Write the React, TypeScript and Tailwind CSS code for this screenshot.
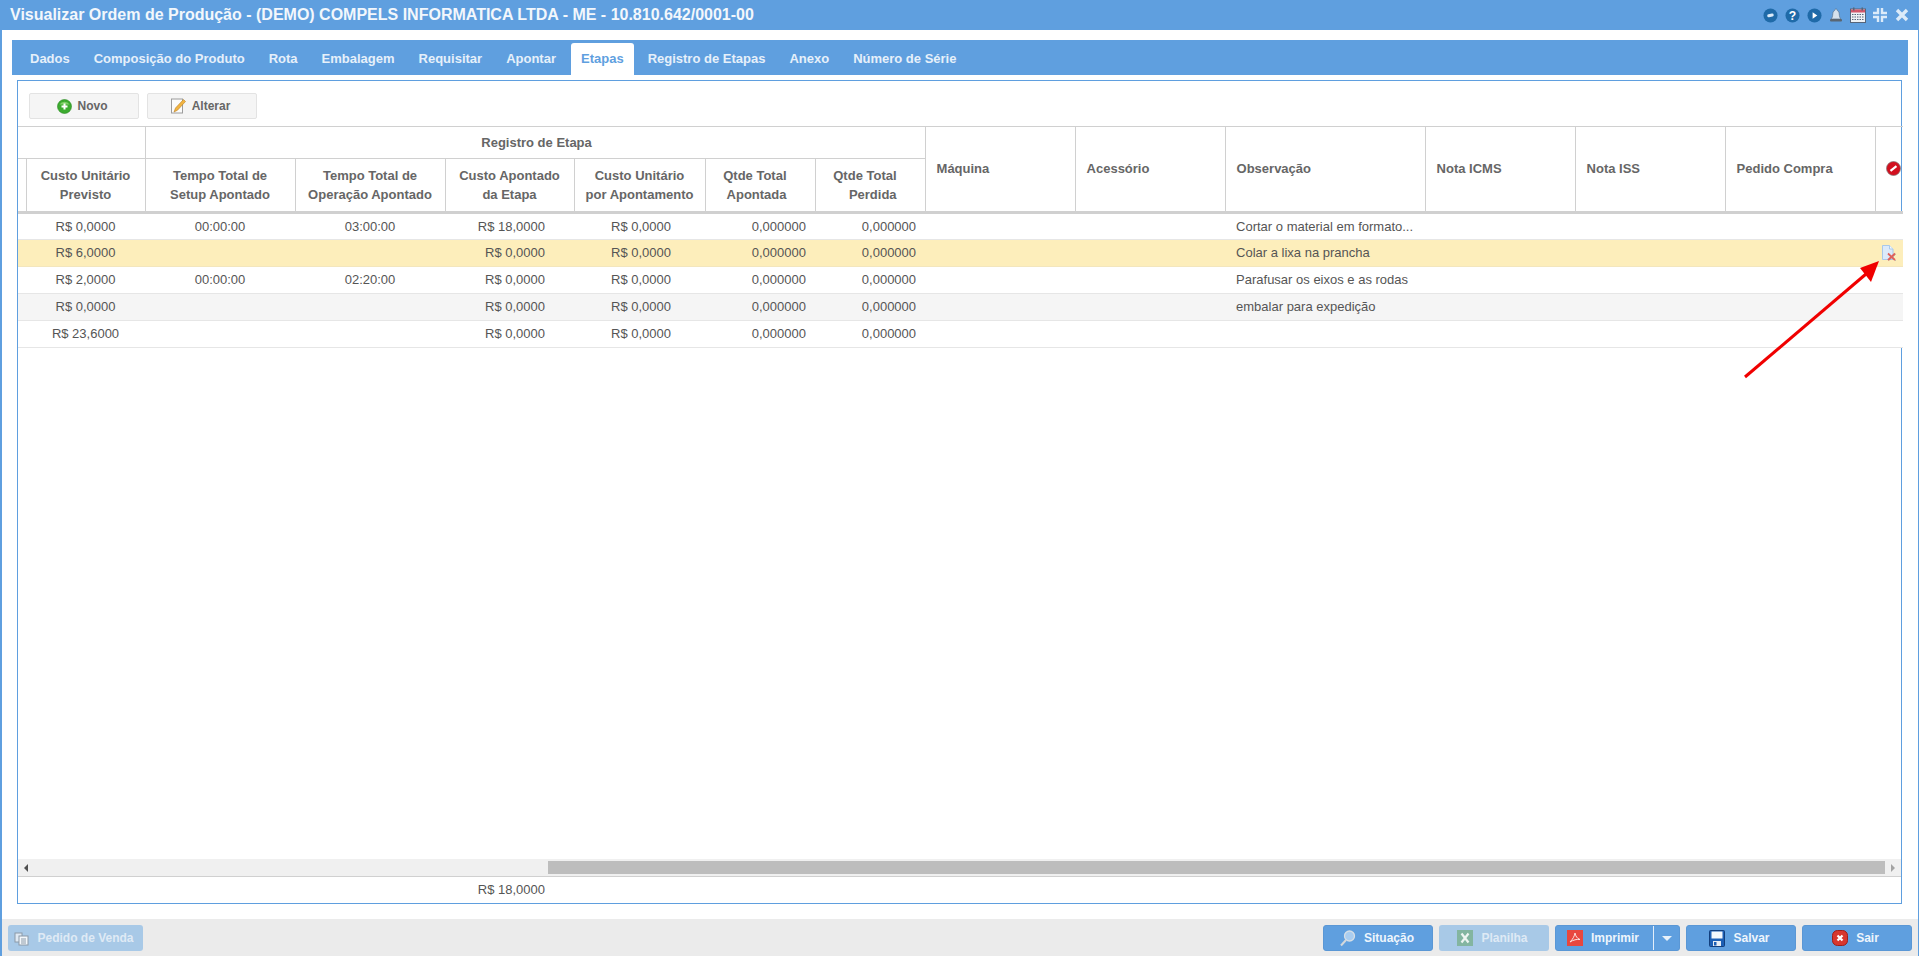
import type { ReactNode } from "react";

const tabs = [
  "Dados",
  "Composição do Produto",
  "Rota",
  "Embalagem",
  "Requisitar",
  "Apontar",
  "Etapas",
  "Registro de Etapas",
  "Anexo",
  "Número de Série",
];

const colWidths = [8, 119, 150, 150, 129, 131, 110, 110, 150, 150, 200, 150, 150, 150, 28];

const rows = [
  { prev: "R$ 0,0000", setup: "00:00:00", oper: "03:00:00", apont: "R$ 18,0000", obs: "Cortar o material em formato...", bg: "bg-white border-[#e6e6e6]" },
  { prev: "R$ 6,0000", setup: "", oper: "", apont: "R$ 0,0000", obs: "Colar a lixa na prancha", bg: "bg-[#fdeebb] border-[#f3e6bd]", icon: true },
  { prev: "R$ 2,0000", setup: "00:00:00", oper: "02:20:00", apont: "R$ 0,0000", obs: "Parafusar os eixos e as rodas", bg: "bg-white border-[#e6e6e6]" },
  { prev: "R$ 0,0000", setup: "", oper: "", apont: "R$ 0,0000", obs: "embalar para expedição", bg: "bg-[#f5f5f5] border-[#e6e6e6]" },
  { prev: "R$ 23,6000", setup: "", oper: "", apont: "R$ 0,0000", obs: "", bg: "bg-white border-[#e6e6e6]" },
];

function Cols() {
  return (
    <colgroup>
      {colWidths.map((w, i) => (
        <col key={i} style={{ width: w }} />
      ))}
    </colgroup>
  );
}

function Th({ children, className = "", colSpan, rowSpan }: { children?: ReactNode; className?: string; colSpan?: number; rowSpan?: number }) {
  return (
    <th
      colSpan={colSpan}
      rowSpan={rowSpan}
      className={`border-r border-[#d0d0d0] text-[13px] leading-[19px] font-bold text-[#666] ${className}`}
    >
      {children}
    </th>
  );
}

function RoundIcon({ children }: { children: ReactNode }) {
  return (
    <svg width="15" height="15" viewBox="0 0 16 16">
      <circle cx="8" cy="8" r="7.500" fill="#1f6aa8" />
      {children}
    </svg>
  );
}

function TitleIcon({ children }: { children: ReactNode }) {
  return <div className="w-[22px] flex justify-center">{children}</div>;
}

function TitleIcons() {
  return (
    <div className="flex items-center">
      <TitleIcon>
        <RoundIcon>
          <rect x="4.500" y="6.200" width="7" height="3.200" rx="1.600" fill="#dcebf9" transform="rotate(-12 8 8)" />
        </RoundIcon>
      </TitleIcon>
      <TitleIcon>
        <RoundIcon>
          <text x="8" y="12.500" textAnchor="middle" fontSize="13" fontWeight="700" fill="#fff" fontFamily="Liberation Sans">?</text>
        </RoundIcon>
      </TitleIcon>
      <TitleIcon>
        <RoundIcon>
          <path d="M6 4.500 11 8 6 11.500Z" fill="#fff" />
        </RoundIcon>
      </TitleIcon>
      <TitleIcon>
        <svg width="14" height="15" viewBox="0 0 14 15">
          <path d="M7 1c1 0 1.300.8 1.300 1.500C10 3.200 10.200 5 10.400 7.500c.2 2 1 3 1.600 3.500H2c.6-.5 1.400-1.500 1.600-3.500C3.800 5 4 3.200 5.700 2.500 5.700 1.800 6 1 7 1Z" fill="#d5e1ec" stroke="#56718c" strokeWidth=".7" />
          <rect x="1" y="11" width="12" height="2.500" rx="1" fill="#5a6672" />
        </svg>
      </TitleIcon>
      <TitleIcon>
        <svg width="16" height="16" viewBox="0 0 16 16">
          <rect x="0.500" y="2" width="15" height="13.500" fill="#eef1f5" stroke="#56657a" />
          <rect x="1" y="2.500" width="14" height="3" fill="#d3566a" />
          <rect x="3" y="0.500" width="1.500" height="3" fill="#56657a" />
          <rect x="11.500" y="0.500" width="1.500" height="3" fill="#56657a" />
          <path d="M2 7.500h12M2 10h12M2 12.500h12" stroke="#56657a" strokeWidth="1.100" strokeDasharray="1.500 1" />
        </svg>
      </TitleIcon>
      <TitleIcon>
        <svg width="16" height="16" viewBox="0 0 16 16" fill="none" stroke="#dcebf9" strokeWidth="2.400">
          <path d="M6 1v5H1M10 1v5h5M1 10h5v5M15 10h-5v5" />
        </svg>
      </TitleIcon>
      <TitleIcon>
        <svg width="14" height="14" viewBox="0 0 14 14">
          <path d="M2 2 12 12M12 2 2 12" stroke="#dcebf9" strokeWidth="3.400" />
        </svg>
      </TitleIcon>
    </div>
  );
}

function PlusIcon() {
  return (
    <svg width="15" height="15" viewBox="0 0 15 15">
      <circle cx="7.500" cy="7.500" r="7" fill="#3cab2f" stroke="#2a8a22" strokeWidth=".6" />
      <path d="M2.500 5.500a5.500 4.500 0 0 1 10 0Z" fill="#9be07f" opacity=".7" />
      <path d="M7.500 4.500v6M4.500 7.500h6" stroke="#fff" strokeWidth="2" />
    </svg>
  );
}

function PencilIcon() {
  return (
    <svg width="16" height="16" viewBox="0 0 16 16">
      <rect x="1.500" y="1" width="11" height="14" fill="#fbfbfb" stroke="#9c9c9c" />
      <path d="M13.500 1.500 5.500 10 4 14l3.500-1.800L15.500 3.500Z" fill="#f2b441" stroke="#b97f23" strokeWidth=".6" />
    </svg>
  );
}

function BlockIcon() {
  return (
    <svg width="15" height="15" viewBox="0 0 15 15">
      <circle cx="7.500" cy="7.500" r="7" fill="#d20f1e" stroke="#7d7d7d" strokeWidth=".7" />
      <path d="M4.500 9.800 10.500 5.200" stroke="#fff" strokeWidth="2.200" />
    </svg>
  );
}

function DocDeleteIcon() {
  return (
    <svg width="16" height="16" viewBox="0 0 16 16">
      <path d="M1.500.5h7l3.500 3.500v10.500h-10.500Z" fill="#dceafa" stroke="#a9c8ea" />
      <path d="M8.500.5v3.500h3.500" fill="#f4f9fe" stroke="#a9c8ea" />
      <path d="M7 8.500l7 6.500M14 8.500l-7 6.500" stroke="#9a9a9a" strokeWidth="1" transform="translate(.6 .6)" />
      <path d="M7 8.500l7 6.500M14 8.500l-7 6.500" stroke="#e0605a" strokeWidth="1.800" />
    </svg>
  );
}

function ToolButton({ icon, label }: { icon: ReactNode; label: string }) {
  return (
    <button className="w-[110px] h-[26px] flex items-center justify-center gap-[6px] pr-[4px] rounded-[2px] border border-[#e3e3e3] bg-[#f5f5f5] text-[12px] font-bold text-[#666]">
      {icon}
      {label}
    </button>
  );
}

function ActionButton({ icon, label, faded, className = "w-[110px]" }: { icon: ReactNode; label: string; faded?: boolean; className?: string }) {
  return (
    <button
      className={`${className} h-[26px] flex items-center justify-center gap-[8px] pr-[3px] rounded-[3px] text-[12px] font-bold ${
        faded ? "bg-[#a8c9e7] text-[#dfeaf5]" : "bg-[#5f9fdf] text-[#eef5fc] border border-[#5a97d5]"
      }`}
    >
      {icon}
      {label}
    </button>
  );
}

export default function App() {
  return (
    <div
      className="relative w-[1919px] h-[956px] overflow-hidden flex flex-col bg-white"
      style={{ fontFamily: "'Liberation Sans', Arial, sans-serif" }}
    >
      {/* title bar */}
      <div className="h-[30px] shrink-0 bg-[#5f9fdf] flex items-center justify-between pl-[10px] pr-[6px]">
        <span className="text-[16px] font-bold text-[#f2f7fc]">
          Visualizar Ordem de Produção - (DEMO) COMPELS INFORMATICA LTDA - ME - 10.810.642/0001-00
        </span>
        <TitleIcons />
      </div>

      <div className="flex-1 min-h-0 flex flex-col border-l-2 border-r border-[#5f9fdf]">
        <div className="flex-1 min-h-0 flex flex-col pt-[10px] pl-[10px] pr-[10px]">
          {/* tabs */}
          <div className="h-[35px] shrink-0 bg-[#5f9fdf] flex items-end pl-[6px]">
            {tabs.map((t) => (
              <div
                key={t}
                className={`h-[32px] flex items-center rounded-t-[3px] text-[13px] font-bold ${
                  t === "Etapas" ? "px-[10px] ml-[3px] mr-[2px] bg-white text-[#5f9fdf]" : "px-[12px] text-[#e6f0fa]"
                }`}
              >
                {t}
              </div>
            ))}
          </div>

          {/* panel */}
          <div className="flex-1 min-h-0 flex flex-col mt-[5px] mb-[15px] ml-[5px] mr-[6px] border border-[#5f9fdf]">
            <div className="h-[45px] shrink-0 flex items-start gap-[8px] pt-[12px] pl-[11px]">
              <ToolButton icon={<PlusIcon />} label="Novo" />
              <ToolButton icon={<PencilIcon />} label="Alterar" />
            </div>

            <table className="table-fixed border-collapse w-[1885px] shrink-0">
              <Cols />
              <thead>
                <tr className="h-[32px] border-t border-[#d0d0d0] border-b">
                  <Th colSpan={2} />
                  <Th colSpan={6} className="pl-[3px]">Registro de Etapa</Th>
                  <Th rowSpan={2} className="text-left pl-[11px] pb-[2px]">Máquina</Th>
                  <Th rowSpan={2} className="text-left pl-[11px] pb-[2px]">Acessório</Th>
                  <Th rowSpan={2} className="text-left pl-[11px] pb-[2px]">Observação</Th>
                  <Th rowSpan={2} className="text-left pl-[11px] pb-[2px]">Nota ICMS</Th>
                  <Th rowSpan={2} className="text-left pl-[11px] pb-[2px]">Nota ISS</Th>
                  <Th rowSpan={2} className="text-left pl-[11px] pb-[2px]">Pedido Compra</Th>
                  <th rowSpan={2} className="pl-[10px] pb-[2px]">
                    <BlockIcon />
                  </th>
                </tr>
                <tr className="h-[54px] border-b-[3px] border-[#d0d0d0]">
                  <Th />
                  <Th className="pb-[1px]">Custo Unitário<br />Previsto</Th>
                  <Th className="pb-[1px]">Tempo Total de<br />Setup Apontado</Th>
                  <Th className="pb-[1px]">Tempo Total de<br />Operação Apontado</Th>
                  <Th className="pb-[1px]">Custo Apontado<br />da Etapa</Th>
                  <Th className="pb-[1px]">Custo Unitário<br />por Apontamento</Th>
                  <Th className="text-right pr-[28px] pb-[1px]">Qtde Total<br />Apontada</Th>
                  <Th className="text-right pr-[28px] pb-[1px]">Qtde Total<br />Perdida</Th>
                </tr>
              </thead>
              <tbody className="text-[13px] text-[#555]">
                {rows.map((r, i) => (
                  <tr key={i} className={`h-[27px] border-b ${r.bg}`}>
                    <td />
                    <td className="text-center">{r.prev}</td>
                    <td className="text-center">{r.setup}</td>
                    <td className="text-center">{r.oper}</td>
                    <td className="text-right pr-[29px]">{r.apont}</td>
                    <td className="text-right pr-[34px]">R$ 0,0000</td>
                    <td className="text-right pr-[9px]">0,000000</td>
                    <td className="text-right pr-[9px]">0,000000</td>
                    <td />
                    <td />
                    <td className="pl-[11px] whitespace-nowrap overflow-hidden">{r.obs}</td>
                    <td />
                    <td />
                    <td />
                    <td className="pl-[6px]">{r.icon && <DocDeleteIcon />}</td>
                  </tr>
                ))}
              </tbody>
            </table>

            <div className="flex-1 min-h-0" />

            {/* horizontal scrollbar */}
            <div className="h-[18px] shrink-0 bg-[#f0f0f0] border-b border-[#d0d0d0] flex items-center">
              <div className="w-[12px] flex justify-end pr-[2px]">
                <div className="border-y-[4px] border-r-[4px] border-y-transparent border-r-[#505050]" />
              </div>
              <div className="flex-1 h-[13px] pl-[518px]">
                <div className="h-full bg-[#bdbdbd]" />
              </div>
              <div className="w-[16px] flex justify-center">
                <div className="border-y-[4px] border-l-[4px] border-y-transparent border-l-[#a3a3a3]" />
              </div>
            </div>

            {/* totals */}
            <table className="table-fixed border-collapse w-[1885px] shrink-0">
              <Cols />
              <tbody>
                <tr className="h-[26px] text-[13px] text-[#555]">
                  <td colSpan={4} />
                  <td className="text-right pr-[29px]">R$ 18,0000</td>
                  <td colSpan={10} />
                </tr>
              </tbody>
            </table>
          </div>
        </div>

        {/* bottom bar */}
        <div className="h-[37px] shrink-0 bg-[#ebebeb] flex items-start justify-between pt-[6px] pl-[6px] pr-[6px]">
          <ActionButton
            faded
            className="w-[135px]"
            label="Pedido de Venda"
            icon={
              <svg width="15" height="15" viewBox="0 0 15 15">
                <rect x="1" y="2" width="7" height="9" fill="#dfe9f3" stroke="#8b9aa8" />
                <rect x="5" y="5" width="9" height="9" fill="#f3f7fb" stroke="#8b9aa8" />
                <path d="M7 8h5M7 10h5M7 12h5" stroke="#8b9aa8" />
              </svg>
            }
          />
          <div className="flex gap-[6px]">
            <ActionButton
              label="Situação"
              icon={
                <svg width="17" height="17" viewBox="0 0 17 17">
                  <circle cx="10.500" cy="6" r="5" fill="#a9cdf0" stroke="#d7dfe6" strokeWidth="1.300" />
                  <path d="M7 10 2 15.500" stroke="#d3d8dc" strokeWidth="2" />
                </svg>
              }
            />
            <ActionButton
              faded
              label="Planilha"
              icon={
                <svg width="16" height="16" viewBox="0 0 16 16">
                  <rect width="16" height="16" fill="#83b5a0" />
                  <path d="M4.500 3.500l7 9M11.500 3.500l-7 9" stroke="#eef5f1" strokeWidth="2.200" />
                </svg>
              }
            />
            <div className="w-[125px] h-[26px] flex rounded-[3px] bg-[#5f9fdf] border border-[#5a97d5] text-[12px] font-bold text-[#eef5fc]">
              <div className="w-[98px] flex items-center gap-[8px] pl-[11px] border-r border-[#e3eefa]">
                <svg width="16" height="16" viewBox="0 0 16 16">
                  <rect width="16" height="16" fill="#e8473f" />
                  <path d="M8 3c-.5 3-2 6-5 9 3-2 7-3 10-2.500-3-1-4.500-3.500-5-6.500Z" fill="none" stroke="#fbe3e1" strokeWidth="1" />
                </svg>
                Imprimir
              </div>
              <div className="flex-1 flex items-center justify-center">
                <div className="border-x-[5px] border-t-[5px] border-x-transparent border-t-[#e8f1fa]" />
              </div>
            </div>
            <ActionButton
              label="Salvar"
              icon={
                <svg width="16" height="17" viewBox="0 0 16 17">
                  <rect x=".5" y=".5" width="15" height="16" rx="1" fill="#1c5fb5" stroke="#123f7d" />
                  <rect x="2.500" y="1.500" width="11" height="7" fill="#f4f8fc" />
                  <rect x="4" y="11" width="8" height="5" fill="#e8eef4" />
                  <rect x="5" y="12" width="2.500" height="3.500" fill="#1c5fb5" />
                </svg>
              }
            />
            <ActionButton
              label="Sair"
              icon={
                <svg width="16" height="16" viewBox="0 0 16 16">
                  <rect x=".5" y=".5" width="15" height="15" rx="5" fill="#d7372f" stroke="#9e1f1a" />
                  <path d="M5.500 5.500l5 5M10.500 5.500l-5 5" stroke="#fff" strokeWidth="2.200" />
                </svg>
              }
            />
          </div>
        </div>
      </div>

      {/* annotation arrow */}
      <svg className="absolute left-0 top-0 pointer-events-none" width="1919" height="956">
        <line x1="1745" y1="377" x2="1866" y2="274" stroke="#f00000" strokeWidth="3" />
        <path d="M1879 261 1871 282 1860 268Z" fill="#f00000" />
      </svg>
    </div>
  );
}
